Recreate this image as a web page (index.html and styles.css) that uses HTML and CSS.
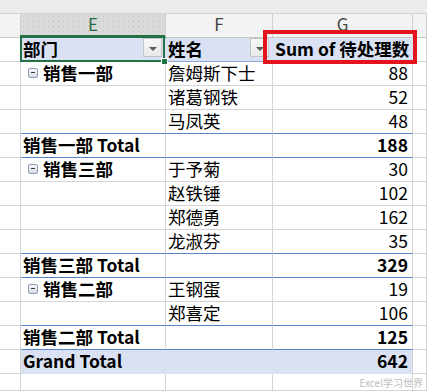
FILE: index.html
```html
<!DOCTYPE html>
<html lang="zh">
<head>
<meta charset="utf-8">
<title>Pivot</title>
<link rel="stylesheet" href="styles.css">
</head>
<body>
<div class="page">
  <div class="sheet">
    <div class="band"></div>
    <div class="ch"></div>
    <div class="ch ch-sel">E</div>
    <div class="ch">F</div>
    <div class="ch">G</div>
    <div class="ch"></div>

    <div class="rh"></div>
    <div class="c hdr hdr-e b">部门<span class="dd"></span></div>
    <div class="c hdr b">姓名<span class="dd"></span></div>
    <div class="c hdr b">Sum of 待处理数</div>
    <div class="rh"></div>

    <div class="rh"></div>
    <div class="c grp b"><span class="tg"></span>销售一部</div>
    <div class="c">詹姆斯下士</div>
    <div class="c num">88</div>
    <div class="rh"></div>

    <div class="rh"></div>
    <div class="c"></div>
    <div class="c">诸葛钢铁</div>
    <div class="c num">52</div>
    <div class="rh"></div>

    <div class="rh"></div>
    <div class="c bb"></div>
    <div class="c bb">马凤英</div>
    <div class="c num bb">48</div>
    <div class="rh"></div>

    <div class="rh"></div>
    <div class="c bb b">销售一部 Total</div>
    <div class="c bb"></div>
    <div class="c num bb b">188</div>
    <div class="rh"></div>

    <div class="rh"></div>
    <div class="c grp b"><span class="tg"></span>销售三部</div>
    <div class="c">于予菊</div>
    <div class="c num">30</div>
    <div class="rh"></div>

    <div class="rh"></div>
    <div class="c"></div>
    <div class="c">赵铁锤</div>
    <div class="c num">102</div>
    <div class="rh"></div>

    <div class="rh"></div>
    <div class="c"></div>
    <div class="c">郑德勇</div>
    <div class="c num">162</div>
    <div class="rh"></div>

    <div class="rh"></div>
    <div class="c bb"></div>
    <div class="c bb">龙淑芬</div>
    <div class="c num bb">35</div>
    <div class="rh"></div>

    <div class="rh"></div>
    <div class="c bb b">销售三部 Total</div>
    <div class="c bb"></div>
    <div class="c num bb b">329</div>
    <div class="rh"></div>

    <div class="rh"></div>
    <div class="c grp b"><span class="tg"></span>销售二部</div>
    <div class="c">王钢蛋</div>
    <div class="c num">19</div>
    <div class="rh"></div>

    <div class="rh"></div>
    <div class="c bb"></div>
    <div class="c bb">郑喜定</div>
    <div class="c num bb">106</div>
    <div class="rh"></div>

    <div class="rh"></div>
    <div class="c bb b">销售二部 Total</div>
    <div class="c bb"></div>
    <div class="c num bb b">125</div>
    <div class="rh"></div>

    <div class="rh"></div>
    <div class="c gt b">Grand Total</div>
    <div class="c gt"></div>
    <div class="c gt num b">642</div>
    <div class="rh"></div>

    <div class="rh"></div>
    <div class="c"></div>
    <div class="c"></div>
    <div class="c"></div>
    <div class="rh"></div>
  </div>
  <div class="redbox"></div>
  <div class="wm">Excel学习世界</div>
</div>
</body>
</html>
```
FILE: styles.css
```css
html, body {
  margin: 0;
  padding: 0;
  background: #ffffff;
}
.page {
  position: relative;
  width: 427px;
  height: 391px;
  overflow: hidden;
  font-family: "Noto Sans CJK SC", "Noto Sans", sans-serif;
  color: #000;
}
.sheet {
  display: grid;
  grid-template-columns: 21px 145px 107px 140px 14px;
  grid-template-rows: 14px 24px repeat(14, 24px) 17px;
}
.sheet > div {
  box-sizing: border-box;
}
.band {
  grid-column: 1 / -1;
  background: #ebebeb;
  border-bottom: 1px solid #d2d2d2;
}
.ch {
  background: #f3f3f3;
  border-right: 1px solid #d0d0d0;
  border-bottom: 1px solid #c8c8c8;
  display: flex;
  align-items: center;
  justify-content: center;
  font-size: 17px;
  line-height: 1.2;
  color: #444;
  padding-bottom: 2px;
}
.ch-sel {
  color: #1e6b41;
  background-color: #dadada;
  background-image: radial-gradient(circle, #c4c4c4 0.6px, transparent 0.9px);
  background-size: 5px 5px;
  border-bottom: 2px solid #217346;
}
.rh {
  border-right: 1px solid #d4d4d4;
  border-bottom: 1px solid #d4d4d4;
}
.c {
  border-right: 1px solid #d4d4d4;
  border-bottom: 1px solid #d4d4d4;
  display: flex;
  align-items: center;
  padding: 0 2px 2px 2px;
  white-space: nowrap;
  font-size: 17.5px;
  line-height: 1.2;
}
.b {
  font-weight: 700;
}
.num {
  justify-content: flex-end;
  padding-right: 4px;
}
.bb {
  border-bottom-color: #5b82cc;
}
.hdr {
  background: #d9e1f2;
  border-bottom-color: #8eaadb;
  border-right-color: #d9e1f2;
}
.hdr-e {
  position: relative;
}
.hdr-e::after {
  content: "";
  position: absolute;
  left: -1px;
  right: 0;
  top: -3px;
  bottom: -1px;
  border: 2px solid #217346;
  z-index: 2;
}
.hdr-e::before {
  content: "";
  position: absolute;
  right: -3px;
  bottom: -4px;
  width: 5px;
  height: 5px;
  background: #217346;
  border: 1px solid #ffffff;
  z-index: 3;
}
.dd {
  margin-left: auto;
  margin-right: 1px;
  align-self: flex-start;
  width: 19px;
  height: 19px;
  box-sizing: border-box;
  background: linear-gradient(#f7f7f7, #e9e9e9);
  border: 1px solid #c4c4c4;
  position: relative;
}
.dd::after {
  content: "";
  position: absolute;
  left: 5px;
  top: 8px;
  border-left: 4px solid transparent;
  border-right: 4px solid transparent;
  border-top: 4px solid #5a5a5a;
}
.grp {
  padding-left: 7px;
}
.tg {
  display: inline-block;
  width: 10px;
  height: 10px;
  box-sizing: border-box;
  margin-right: 5px;
  border: 1px solid #8d9cb6;
  border-radius: 2px;
  background: linear-gradient(#f5f7fb, #d6dce8);
  position: relative;
  flex: none;
}
.tg::after {
  content: "";
  position: absolute;
  left: 2px;
  right: 2px;
  top: 3.5px;
  height: 1px;
  background: #3a3a3a;
}
.gt {
  background: #d9e1f2;
  border-right-color: #d9e1f2;
  border-bottom-color: #d9e1f2;
}
.gt.num {
  border-right-color: #d4d4d4;
}
.redbox {
  position: absolute;
  left: 263px;
  top: 30px;
  width: 154px;
  height: 34px;
  box-sizing: border-box;
  border: 4px solid #e3141e;
  z-index: 4;
}
.wm {
  position: absolute;
  right: 4px;
  bottom: 2px;
  font-size: 10px;
  color: #bcbcbc;
  line-height: 1.2;
  z-index: 4;
}
```
